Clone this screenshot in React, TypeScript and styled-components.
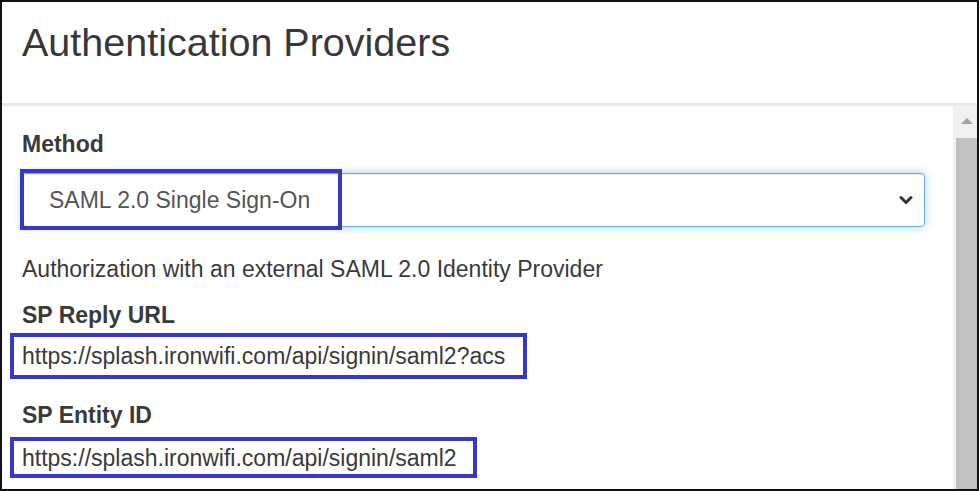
import React, { FC } from 'react'
import styled, { createGlobalStyle } from 'styled-components'

const GlobalStyle = createGlobalStyle`
	html, body {
		margin: 0;
		padding: 0;
		background: #fff;
	}
	body {
		font-family: 'Liberation Sans', Arial, sans-serif;
		color: #333;
	}
`

interface Field {
	label: string
	value: string
	width: number
	height: number
	gap: number
	after: number
}

const fields: Field[] = [
	{ label: 'SP Reply URL', value: 'https://splash.ironwifi.com/api/signin/saml2?acs', width: 517, height: 46, gap: 18, after: 4 },
	{ label: 'SP Entity ID', value: 'https://splash.ironwifi.com/api/signin/saml2', width: 467, height: 41, gap: 22, after: 8 },
]

const App: FC = () => {
	return (
		<>
			<GlobalStyle />
			<StyledFrame>
				<StyledHeader>
					<StyledTitle>Authentication Providers</StyledTitle>
				</StyledHeader>
				<StyledMain>
					<StyledContent>
						<StyledLabel $top={24} $bottom={15}>
							Method
						</StyledLabel>
						<StyledSelectWrap>
							<StyledSelect>
								<span>SAML 2.0 Single Sign-On</span>
								<svg width="14" height="10" viewBox="0 0 14 10">
									<path d="M2 2.5 L7 7.5 L12 2.5" fill="none" stroke="#333" strokeWidth="3" strokeLinecap="round" strokeLinejoin="round" />
								</svg>
							</StyledSelect>
							<StyledSelectMark />
						</StyledSelectWrap>
						<StyledHint>Authorization with an external SAML 2.0 Identity Provider</StyledHint>
						{fields.map((f) => (
							<React.Fragment key={f.label}>
								<StyledLabel $top={f.gap} $bottom={f.after}>
									{f.label}
								</StyledLabel>
								<StyledValue $width={f.width} $height={f.height}>
									{f.value}
								</StyledValue>
							</React.Fragment>
						))}
					</StyledContent>
					<StyledScrollbar>
						<StyledScrollArrow />
						<StyledScrollThumb />
					</StyledScrollbar>
				</StyledMain>
			</StyledFrame>
		</>
	)
}

export default App

const StyledFrame = styled.div`
	width: 979px;
	height: 491px;
	box-sizing: border-box;
	border: 2px solid #111;
	display: flex;
	flex-direction: column;
	overflow: hidden;
`

const StyledHeader = styled.div`
	flex-shrink: 0;
	height: 80px;
	padding: 21px 0 0 20px;
	border-bottom: 3px solid #e9e9e9;
`

const StyledTitle = styled.h1`
	margin: 0;
	font-size: 39.5px;
	line-height: 39px;
	font-weight: 400;
	color: #383838;
`

const StyledMain = styled.div`
	flex: 1;
	display: flex;
	min-height: 0;
`

const StyledContent = styled.div`
	flex: 1;
	padding-left: 20px;
	font-size: 23px;
	line-height: 28px;
	color: #3a3a3a;
`

const StyledLabel = styled.div<{ $top: number; $bottom: number }>`
	margin: ${(p) => p.$top}px 0 ${(p) => p.$bottom}px;
	font-weight: 700;
	color: #3a3a3a;
`

const StyledSelectWrap = styled.div`
	position: relative;
	width: 903px;
`

const StyledSelect = styled.div`
	height: 54px;
	box-sizing: border-box;
	border: 1px solid #66afe9;
	border-radius: 4px;
	box-shadow: inset 0 1px 1px rgba(0, 0, 0, 0.075), 0 0 8px rgba(102, 175, 233, 0.6);
	display: flex;
	align-items: center;
	justify-content: space-between;
	padding: 0 11px 0 26px;
	color: #555;
`

const StyledSelectMark = styled.div`
	position: absolute;
	left: -2px;
	top: -4px;
	width: 322px;
	height: 61px;
	box-sizing: border-box;
	border: 4px solid #3538c8;
`

const StyledHint = styled.div`
	margin-top: 28px;
`

const StyledValue = styled.div<{ $width: number; $height: number }>`
	width: ${(p) => p.$width}px;
	height: ${(p) => p.$height}px;
	box-sizing: border-box;
	margin-left: -12px;
	padding-left: 8px;
	border: 4px solid #3538c8;
	display: flex;
	align-items: center;
	white-space: nowrap;
`

const StyledScrollbar = styled.div`
	width: 24px;
	flex-shrink: 0;
	background: #f1f1f1;
	display: flex;
	flex-direction: column;
	align-items: flex-end;
`

const StyledScrollArrow = styled.div`
	height: 32px;
	width: 21px;
	display: flex;
	align-items: center;
	justify-content: center;
	&::before {
		content: '';
		border-left: 6px solid transparent;
		border-right: 6px solid transparent;
		border-bottom: 6px solid #a3a3a3;
		margin-top: -2px;
	}
`

const StyledScrollThumb = styled.div`
	flex: 1;
	width: 21px;
	background: #c1c1c1;
`
